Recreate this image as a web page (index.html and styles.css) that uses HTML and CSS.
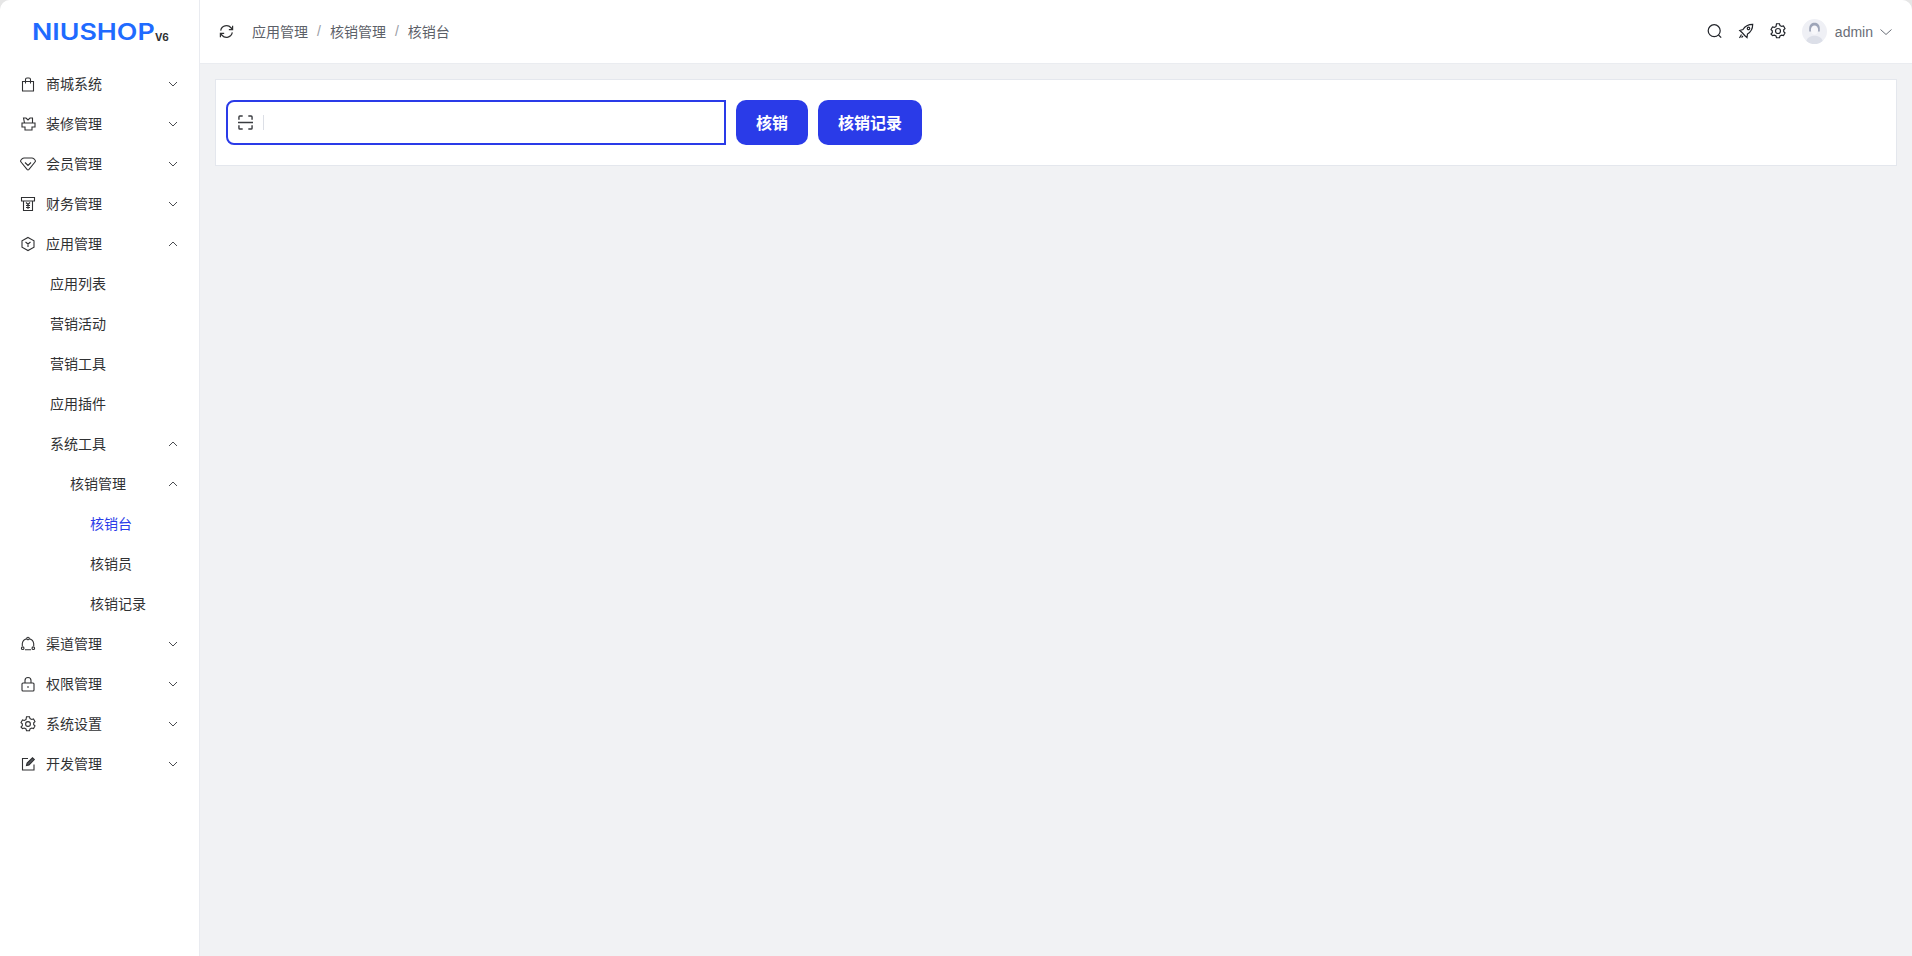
FILE: index.html
```html
<!DOCTYPE html>
<html lang="zh">
<head>
<meta charset="utf-8">
<title>核销台</title>
<link rel="stylesheet" href="styles.css">
</head>
<body>
<div class="app">
  <aside class="sidebar">
    <div class="logo"><span class="logo-main">NIUSHOP</span><span class="logo-ver">V6</span></div>
    <nav class="menu">
      <a class="row l1"><svg class="ico" viewBox="0 0 16 16"><path d="M2.500 5.500h11v9.500h-11zM5.500 7.500V3.500a1.500 1.500 0 0 1 1.500-1.500h2a1.500 1.500 0 0 1 1.500 1.500v4"/></svg><span class="lbl">商城系统</span><svg class="arr" viewBox="0 0 12 12"><path d="M2 4l4 4 4-4"/></svg></a>
      <a class="row l1"><svg class="ico" viewBox="0 0 16 16"><path d="M3.500 2h2.500l2 2 2-2h2.500v5h2.500v4h-3v3h-7v-3h-3V7h2.500zM3.500 7h9"/></svg><span class="lbl">装修管理</span><svg class="arr" viewBox="0 0 12 12"><path d="M2 4l4 4 4-4"/></svg></a>
      <a class="row l1"><svg class="ico" viewBox="0 0 16 16"><path d="M4 2h8q1 0 1.700.6l1.300 1.400q.8 1 0 2L9 13.300q-1 1-2 0L1 6q-.8-1 0-2l1.300-1.400Q3 2 4 2zM5 6.500l3 3 3-3"/></svg><span class="lbl">会员管理</span><svg class="arr" viewBox="0 0 12 12"><path d="M2 4l4 4 4-4"/></svg></a>
      <a class="row l1"><svg class="ico" viewBox="0 0 16 16"><path d="M1.500 1.500h13v3.500h-13zM3.500 5v9.500h9V5M6 6.500l2 2 2-2M8 8.500v4.500M6 9.500h4M6 11.500h4"/></svg><span class="lbl">财务管理</span><svg class="arr" viewBox="0 0 12 12"><path d="M2 4l4 4 4-4"/></svg></a>
      <a class="row l1"><svg class="ico" viewBox="0 0 16 16"><path d="M8 1.500l6 3.300v6.400l-6 3.300-6-3.300V4.800zM5.500 6L8 8l2.500-2M8 8v3"/></svg><span class="lbl">应用管理</span><svg class="arr" viewBox="0 0 12 12"><path d="M2 8l4-4 4 4"/></svg></a>
      <a class="row l2"><span class="lbl">应用列表</span></a>
      <a class="row l2"><span class="lbl">营销活动</span></a>
      <a class="row l2"><span class="lbl">营销工具</span></a>
      <a class="row l2"><span class="lbl">应用插件</span></a>
      <a class="row l2"><span class="lbl">系统工具</span><svg class="arr" viewBox="0 0 12 12"><path d="M2 8l4-4 4 4"/></svg></a>
      <a class="row l3"><span class="lbl">核销管理</span><svg class="arr" viewBox="0 0 12 12"><path d="M2 8l4-4 4 4"/></svg></a>
      <a class="row l4 active"><span class="lbl">核销台</span></a>
      <a class="row l4"><span class="lbl">核销员</span></a>
      <a class="row l4"><span class="lbl">核销记录</span></a>
      <a class="row l1"><svg class="ico" viewBox="0 0 16 16"><path d="M6.500 2.800A6 6 0 0 0 2.300 7.500v2.500M9.500 2.800a6 6 0 0 1 4.200 4.700v2.500M5 13.800h6"/><circle cx="8" cy="2.500" r="1.300"/><circle cx="2.700" cy="12.200" r="1.300"/><circle cx="13.300" cy="12.200" r="1.300"/></svg><span class="lbl">渠道管理</span><svg class="arr" viewBox="0 0 12 12"><path d="M2 4l4 4 4-4"/></svg></a>
      <a class="row l1"><svg class="ico" viewBox="0 0 16 16"><path d="M3 7h10a1 1 0 0 1 1 1v6a1 1 0 0 1-1 1H3a1 1 0 0 1-1-1V8a1 1 0 0 1 1-1zM5 7V4.500a3 3 0 0 1 6 0V7M7 11h2"/></svg><span class="lbl">权限管理</span><svg class="arr" viewBox="0 0 12 12"><path d="M2 4l4 4 4-4"/></svg></a>
      <a class="row l1"><svg class="ico" viewBox="0 0 16 16"><path d="M6.500 1.500h3l.5 1.800 1.700.9 1.800-.5 1.500 2.600-1.300 1.300v1.800l1.300 1.300-1.500 2.600-1.800-.5-1.700.9-.5 1.800h-3l-.5-1.800-1.700-.9-1.800.5L1 11.700l1.300-1.300V8.600L1 7.300l1.500-2.600 1.800.5 1.700-.9z" transform="translate(0 -.75)"/><circle cx="8" cy="8" r="2.400"/></svg><span class="lbl">系统设置</span><svg class="arr" viewBox="0 0 12 12"><path d="M2 4l4 4 4-4"/></svg></a>
      <a class="row l1"><svg class="ico" viewBox="0 0 16 16"><path d="M8 2.500H2.500v11.500H14V8.500"/><path class="pen" d="M6.500 9.500l.6-2.500 5.400-5.200 1.800 1.800-5.300 5.300z"/></svg><span class="lbl">开发管理</span><svg class="arr" viewBox="0 0 12 12"><path d="M2 4l4 4 4-4"/></svg></a>
    </nav>
  </aside>
  <div class="main">
    <header class="topbar">
      <svg class="refresh" viewBox="0 0 16 16"><path d="M1.800 7a6.300 6.300 0 0 1 11-3L14.500 6M14.200 9a6.300 6.300 0 0 1-11 3L1.500 10M14.500 1.800V6h-4M1.500 14.200V10h4"/></svg>
      <div class="crumbs"><span>应用管理</span><i>/</i><span>核销管理</span><i>/</i><span>核销台</span></div>
      <div class="tools">
        <svg class="tool" viewBox="0 0 16 16"><circle cx="8.200" cy="7.700" r="6"/><path d="M12.500 12l2.700 2.700"/></svg>
        <svg class="tool" viewBox="0 0 16 16"><path d="M5 6.500C7 3 10 1.300 14.700 1.300c0 4.700-1.700 7.700-5.200 9.700l-.5 3.500-2.300-2L4.500 10 1.800 7.500zM3.500 11.500L1.500 15M5 13l-1.500 1.500M10.500 4.200a1.200 1.200 0 1 1 0 2.400 1.200 1.200 0 0 1 0-2.400z"/></svg>
        <svg class="tool" viewBox="0 0 16 16"><path d="M6.500 1.500h3l.5 1.800 1.700.9 1.800-.5 1.500 2.600-1.300 1.300v1.800l1.300 1.300-1.500 2.600-1.800-.5-1.700.9-.5 1.800h-3l-.5-1.800-1.700-.9-1.800.5L1 11.700l1.300-1.300V8.600L1 7.300l1.500-2.600 1.800.5 1.700-.9z" transform="translate(0 -.75)"/><circle cx="8" cy="8" r="2.500"/></svg>
        <div class="user">
          <svg class="avatar" viewBox="0 0 26 26"><circle cx="13" cy="13" r="13" fill="#eff0f5"/><path d="M7.500 10c0-4 2.500-6 5.500-6s5.500 2 5.500 6v3h-11z" fill="#9ea5b8"/><ellipse cx="13" cy="11.500" rx="3.800" ry="4.800" fill="#f7f7fa"/><path d="M4.500 23c1-4 5-5.500 8.500-5.500S20.500 19 21.500 23A13 13 0 0 1 4.500 23z" fill="#dcdfe8"/></svg>
          <span class="uname">admin</span>
          <svg class="uarr" viewBox="0 0 12 6"><path d="M.5.500l5.500 5 5.500-5"/></svg>
        </div>
      </div>
    </header>
    <main class="content">
      <section class="card">
        <div class="field">
          <svg class="scan" viewBox="0 0 16 16"><path d="M1 5V2a1 1 0 0 1 1-1h3M11 1h3a1 1 0 0 1 1 1v3M1 11v3a1 1 0 0 0 1 1h3M11 15h3a1 1 0 0 0 1-1v-3M0 8h16"/></svg>
          <span class="sep"></span>
        </div>
        <button class="btn b-a">核销</button>
        <button class="btn b-b">核销记录</button>
      </section>
    </main>
  </div>
</div>
</body>
</html>
```
FILE: styles.css
```css
* { box-sizing: border-box; }
html, body { margin: 0; height: 100%; }
body {
  font-family: "Liberation Sans", "Noto Sans CJK SC", sans-serif;
  font-size: 14px;
  color: #303133;
  background: #e6e6e6;
  overflow: hidden;
}
.app {
  display: flex;
  height: 956px;
  background: #f1f2f4;
  border-radius: 10px 10px 0 0;
  overflow: hidden;
}
.sidebar {
  width: 200px;
  flex: none;
  background: #fff;
  border-right: 1px solid #e9ebf0;
}
.logo {
  height: 64px;
  display: flex;
  align-items: flex-end;
  padding-bottom: 22px;
  padding-left: 32px;
}
.logo-main {
  display: block;
  width: 123px;
  margin-bottom: 1px;
  font-family: Inter, sans-serif;
  font-size: 22.5px;
  line-height: 18px;
  font-weight: 600;
  color: #1f6bff;
  transform: scaleX(1.19);
  transform-origin: left center;
}
.logo-ver {
  font-family: Inter, sans-serif;
  font-size: 10px;
  line-height: 10px;
  font-weight: 700;
  color: #303133;
}
.menu { display: flex; flex-direction: column; }
.row {
  height: 40px;
  display: flex;
  align-items: center;
  padding-right: 20px;
  color: #303133;
}
.l1 { padding-left: 20px; }
.l2 { padding-left: 50px; }
.l3 { padding-left: 70px; }
.l4 { padding-left: 90px; }
.active { color: #2a3be8; }
.lbl { line-height: 20px; }
.ico {
  width: 16px;
  height: 16px;
  margin-right: 10px;
  flex: none;
  fill: none;
  stroke: #303133;
  stroke-width: 1.100;
}
.pen { fill: #55585e; }
.arr {
  width: 12px;
  height: 12px;
  margin-left: auto;
  fill: none;
  stroke: #4a4c50;
  stroke-width: 1;
}
.main { flex: 1; min-width: 0; display: flex; flex-direction: column; }
.topbar {
  height: 64px;
  flex: none;
  background: #fff;
  border-bottom: 1px solid #eaecf0;
  display: flex;
  align-items: center;
  padding: 0 20px 1px 19px;
}
.refresh {
  width: 15px;
  height: 15px;
  flex: none;
  fill: none;
  stroke: #303133;
  stroke-width: 1.300;
}
.crumbs { display: flex; align-items: center; margin-left: 18px; color: #5c6068; }
.crumbs i { font-style: normal; color: #9a9da5; margin: 0 9px; }
.tools { margin-left: auto; display: flex; align-items: center; }
.tool {
  width: 16px;
  height: 16px;
  margin-right: 16px;
  fill: none;
  stroke: #22252b;
  stroke-width: 1.200;
}
.user { display: flex; align-items: center; }
.avatar { width: 25px; height: 25px; }
.uname { color: #6a6e78; margin: 1px 0 0 8px; }
.uarr {
  width: 12px;
  height: 6px;
  margin: 1px 0 0 7px;
  fill: none;
  stroke: #6a6e78;
  stroke-width: 1;
}
.content { padding: 15px; }
.card {
  height: 87px;
  background: #fff;
  border: 1px solid #e4e7ed;
  display: flex;
  align-items: center;
  padding: 0 10px;
}
.field {
  width: 500px;
  height: 45px;
  border: 2px solid #2a3be8;
  border-radius: 8px 0 0 8px;
  display: flex;
  align-items: center;
  padding-left: 10px;
}
.scan {
  width: 15px;
  height: 15px;
  fill: none;
  stroke: #3a3c40;
  stroke-width: 1.500;
}
.sep { width: 1px; height: 15px; background: #dcdfe6; margin-left: 10px; }
.btn {
  height: 45px;
  border: 0;
  border-radius: 10px;
  background: #2a3be8;
  color: #fff;
  font: 600 16px "Liberation Sans", "Noto Sans CJK SC", sans-serif;
  padding: 0 0 1px;
}
.b-a { width: 72px; margin-left: 10px; }
.b-b { width: 104px; margin-left: 10px; }
```
